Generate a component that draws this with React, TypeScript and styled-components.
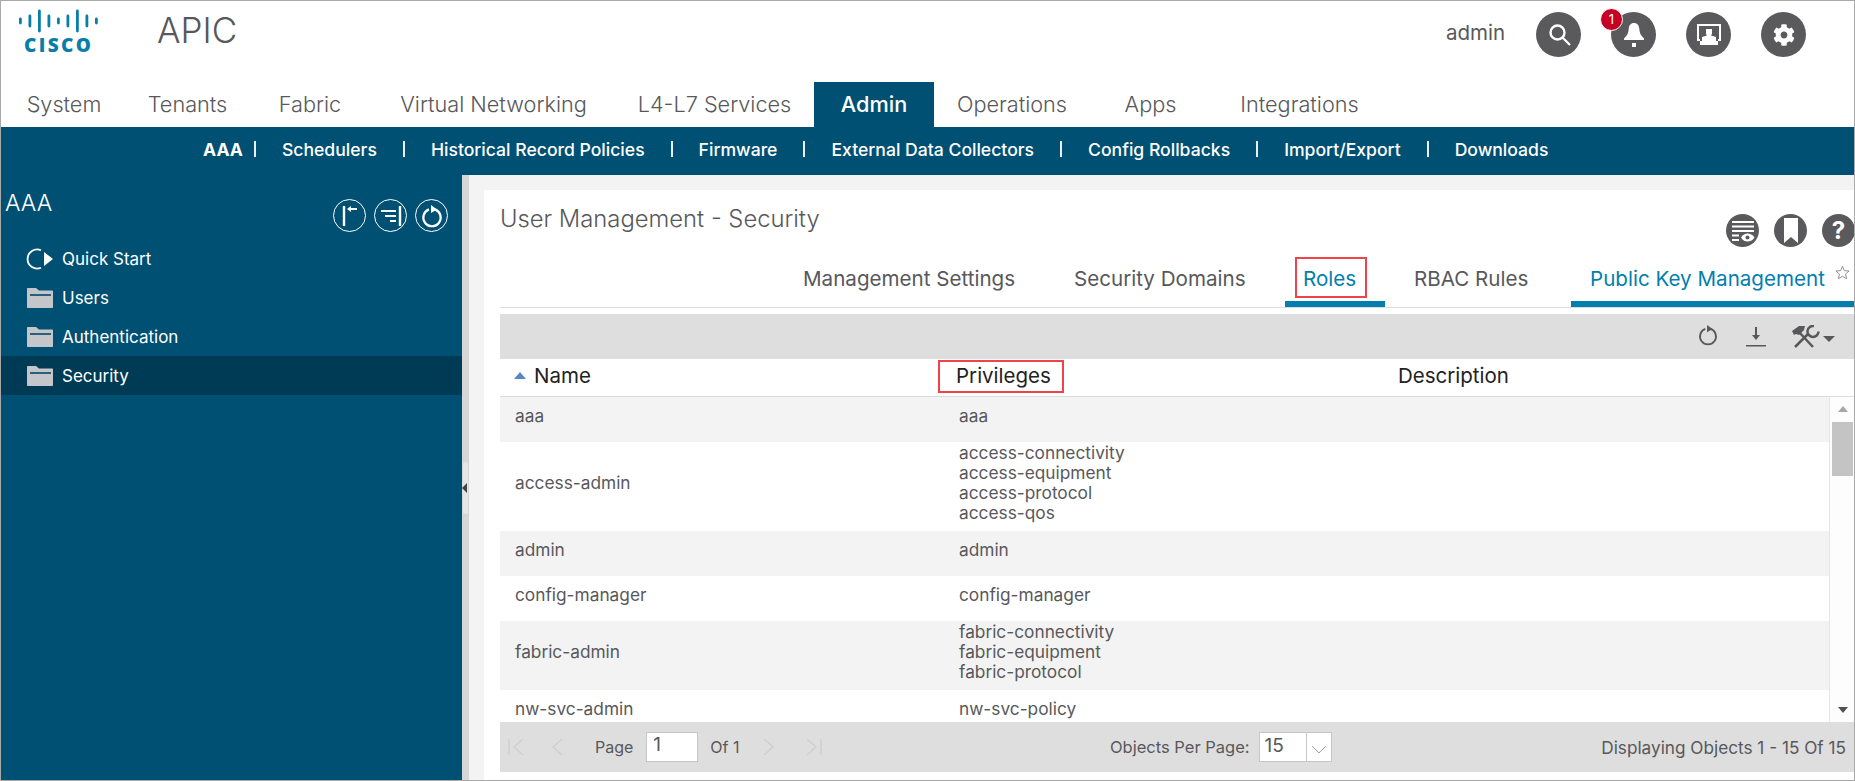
import { Fragment } from "react";
import styled, { createGlobalStyle } from "styled-components";
import { FaCog } from "react-icons/fa";

const GlobalStyle = createGlobalStyle`
  html, body {
    margin: 0;
    padding: 0;
    background: #fff;
  }

  body {
    font-family: Inter, Roboto, "Liberation Sans", sans-serif;
    color: #58585b;
  }
`;

const Frame = styled.div`
  width: 1855px;
  height: 781px;
  box-sizing: border-box;
  border: 1px solid #a9a9a9;
  display: flex;
  flex-direction: column;
  overflow: hidden;
`;

const TopBar = styled.header`
  height: 81px;
  flex: none;
  display: flex;
  align-items: flex-start;
`;

const Logo = styled.div`
  width: 156px;
  flex: none;
  padding-top: 8px;
  box-sizing: border-box;
  display: flex;
  flex-direction: column;
`;

const LogoBars = styled.svg`
  display: block;
  margin-left: 16px;
`;

const LogoWord = styled.span`
  margin-left: 23px;
  margin-top: 2px;
  font-family: "Open Sans", sans-serif;
  font-size: 19px;
  font-weight: 800;
  line-height: 20px;
  letter-spacing: 2.4px;
  color: #0a7eaa;
`;

const AppName = styled.div`
  font-size: 35px;
  font-weight: 300;
  line-height: 58px;
  color: #58585b;
`;

const TopRight = styled.div`
  margin-left: auto;
  padding: 11px 48px 0 0;
  display: flex;
  align-items: center;
`;

const UserName = styled.span`
  font-size: 20.500px;
  margin-right: 31px;
  margin-top: -5px;
  color: #58585b;
`;

const RoundButton = styled.div<{ $size?: number }>`
  position: relative;
  width: ${({ $size }) => $size ?? 45}px;
  height: ${({ $size }) => $size ?? 45}px;
  border-radius: 50%;
  background: #5a5a5d;
  color: #fff;
  display: flex;
  align-items: center;
  justify-content: center;
  flex: none;
`;

const TopButtons = styled.div`
  display: flex;
  gap: 30px;
`;

const Badge = styled.span`
  position: absolute;
  left: -11px;
  top: -4px;
  width: 23px;
  height: 23px;
  box-sizing: border-box;
  border-radius: 50%;
  background: #c70025;
  border: 1px solid #fff;
  color: #fff;
  font-size: 13px;
  line-height: 20px;
  text-align: center;
`;

const MainTabs = styled.nav`
  height: 45px;
  flex: none;
  display: flex;
`;

const MainTab = styled.div<{ $w: number; $active?: boolean }>`
  width: ${({ $w }) => $w}px;
  flex: none;
  box-sizing: border-box;
  padding-bottom: 2px;
  display: flex;
  align-items: center;
  justify-content: center;
  font-size: 21.700px;
  font-weight: ${({ $active }) => ($active ? 500 : 300)};
  background: ${({ $active }) => ($active ? "#005073" : "transparent")};
  color: ${({ $active }) => ($active ? "#fff" : "#58585b")};
`;

const SubNav = styled.nav`
  height: 48px;
  flex: none;
  box-sizing: border-box;
  padding: 0 0 4px 202px;
  background: #005073;
  color: #fff;
  display: flex;
  align-items: center;
  font-size: 17.600px;
`;

const SubItem = styled.span<{ $bold?: boolean }>`
  font-weight: ${({ $bold }) => ($bold ? 700 : 500)};
  margin-right: ${({ $bold }) => ($bold ? 11 : 26)}px;
`;

const SubSep = styled.span`
  width: 2px;
  height: 16px;
  background: #e8f0f4;
  margin-right: 26px;
`;

const Body = styled.main`
  flex: 1;
  min-height: 0;
  display: flex;
`;

const Sidebar = styled.aside`
  width: 461px;
  flex: none;
  background: #005073;
  color: #fff;
`;

const SidebarHead = styled.div`
  height: 64px;
  display: flex;
  justify-content: space-between;
  padding: 24px 14px 0 4px;
  box-sizing: border-box;
`;

const SidebarTitle = styled.div`
  font-size: 23px;
  font-weight: 300;
  line-height: 8px;
`;

const SidebarActions = styled.div`
  display: flex;
  gap: 8px;
`;

const OutlineButton = styled.div`
  width: 33px;
  height: 33px;
  box-sizing: border-box;
  border: 1px solid #fff;
  border-radius: 50%;
  display: flex;
  align-items: center;
  justify-content: center;
`;

const TreeRow = styled.div<{ $selected?: boolean }>`
  height: 39px;
  display: flex;
  align-items: center;
  gap: 8px;
  padding-left: 25px;
  font-size: 17px;
  background: ${({ $selected }) => ($selected ? "#003b55" : "transparent")};
`;

const Handle = styled.div`
  position: relative;
  width: 7px;
  flex: none;
  background: #d6d6d6;

  &::before {
    content: "";
    position: absolute;
    left: 1px;
    right: 1px;
    top: 287px;
    height: 52px;
    background: #e6e6e6;
    border-radius: 3px;
  }

  &::after {
    content: "";
    position: absolute;
    left: 0;
    top: 308px;
    border: 5px solid transparent;
    border-left: 0;
    border-right: 5px solid #444;
  }
`;

const ContentArea = styled.div`
  flex: 1;
  min-width: 0;
  background: #f3f3f3;
  padding: 15px 0 0 15px;
  display: flex;
`;

const Panel = styled.section`
  flex: 1;
  min-width: 0;
  background: #fff;
  padding: 0 0 8px 16px;
  display: flex;
  flex-direction: column;
  overflow: hidden;
`;

const PanelHead = styled.div`
  height: 67px;
  flex: none;
  display: flex;
  justify-content: space-between;
  align-items: flex-start;
`;

const PanelTitle = styled.h2`
  margin: 14px 0 0;
  font-size: 23.800px;
  font-weight: 300;
  line-height: 30px;
  color: #58585b;
`;

const PanelActions = styled.div`
  display: flex;
  gap: 15px;
  margin: 24px -1px 0 0;
`;

const HelpMark = styled.span`
  font-size: 24px;
  font-weight: 700;
  line-height: 1;
`;

const Tabs = styled.div`
  height: 50px;
  flex: none;
  display: flex;
  justify-content: flex-end;
  border-bottom: 1px solid #dcdcdc;
`;

const Tab = styled.div<{ $w: number; $pl: number; $active?: boolean }>`
  position: relative;
  width: ${({ $w }) => $w}px;
  padding: 0 0 2px ${({ $pl }) => $pl}px;
  box-sizing: border-box;
  flex: none;
  display: flex;
  align-items: center;
  font-size: 20.600px;
  color: ${({ $active }) => ($active ? "#027fae" : "#58585b")};
  border-bottom: 6px solid ${({ $active }) => ($active ? "#027fae" : "transparent")};
`;

const Star = styled.svg`
  position: absolute;
  right: 4px;
  top: 8px;
`;

const Marked = styled.span<{ $inset: string }>`
  position: relative;

  &::after {
    content: "";
    position: absolute;
    inset: ${({ $inset }) => $inset};
    border: 2px solid #f04349;
  }
`;

const Toolbar = styled.div`
  height: 45px;
  flex: none;
  margin-top: 6px;
  background: #dedede;
  display: flex;
  align-items: center;
  justify-content: flex-end;
  padding-right: 18px;
  color: #58585b;
`;

const ToolIcon = styled.svg<{ $gap?: number }>`
  display: block;
  margin-right: ${({ $gap }) => $gap ?? 0}px;
`;

const HeaderRow = styled.div`
  height: 38px;
  flex: none;
  box-sizing: border-box;
  padding-bottom: 4px;
  display: grid;
  grid-template-columns: 444px 442px 1fr;
  align-items: center;
  border-bottom: 1px solid #dcdcdc;
  font-size: 20.500px;
  color: #222;
`;

const HeaderCell = styled.div<{ $pl?: number }>`
  padding-left: ${({ $pl }) => $pl ?? 12}px;
  display: flex;
  align-items: center;
  gap: 8px;
`;

const SortArrow = styled.span`
  width: 0;
  height: 0;
  border: 6px solid transparent;
  border-top: 0;
  border-bottom: 7px solid #5b86c4;
`;

const TableBody = styled.div`
  height: 325px;
  flex: none;
  display: flex;
  overflow: hidden;
`;

const Rows = styled.div`
  flex: 1;
  min-width: 0;
`;

const Row = styled.div<{ $odd: boolean }>`
  min-height: 45px;
  box-sizing: border-box;
  display: grid;
  grid-template-columns: 444px 1fr;
  align-items: center;
  padding: 1px 0 8px;
  font-size: 17.300px;
  line-height: 20px;
  background: ${({ $odd }) => ($odd ? "#f3f3f3" : "#fff")};
`;

const Cell = styled.div`
  padding-left: 15px;
`;

const Scrollbar = styled.div`
  width: 25px;
  flex: none;
  box-sizing: border-box;
  border-left: 1px solid #e6e6e6;
  background: #fdfdfd;
  padding-left: 2px;
  display: flex;
  flex-direction: column;
  position: relative;
`;

const ScrollArrow = styled.span<{ $down?: boolean }>`
  position: absolute;
  left: 8px;
  width: 0;
  height: 0;
  border: 5.5px solid transparent;
  ${({ $down }) =>
    $down
      ? "bottom: 9px; border-bottom: 0; border-top: 6px solid #505050;"
      : "top: 9px; border-top: 0; border-bottom: 6px solid #a6a6a6;"}
`;

const ScrollThumb = styled.div`
  width: 21px;
  height: 54px;
  margin-top: 25px;
  background: #c4c4c4;
`;

const Footer = styled.div`
  height: 50px;
  flex: none;
  background: #dedede;
  display: grid;
  grid-template-columns: 610px auto 1fr;
  align-items: center;
  font-size: 16.500px;
  color: #58585b;
`;

const Pager = styled.div`
  display: flex;
  align-items: center;
  padding-left: 8px;
`;

const PagerIcon = styled.svg<{ $gap: number }>`
  display: block;
  margin-right: ${({ $gap }) => $gap}px;
  flex: none;
`;

const PagerText = styled.span<{ $gap: number }>`
  margin-right: ${({ $gap }) => $gap}px;
  font-size: 16px;
`;

const PageInput = styled.div`
  width: 52px;
  height: 30px;
  box-sizing: border-box;
  background: #fff;
  border: 1px solid #c6c6c6;
  font-size: 19px;
  line-height: 24px;
  padding-left: 6px;
  margin-right: 12px;
`;

const PerPage = styled.div`
  display: flex;
  align-items: center;
  gap: 9px;
`;

const Select = styled.div`
  width: 73px;
  height: 30px;
  box-sizing: border-box;
  background: #fff;
  border: 1px solid #c6c6c6;
  display: flex;
  font-size: 19px;
  line-height: 26px;
`;

const SelectValue = styled.span`
  width: 47px;
  padding-left: 5px;
  box-sizing: border-box;
  border-right: 1px solid #c6c6c6;
`;

const SelectCaret = styled.span`
  flex: 1;
  display: flex;
  align-items: center;
  justify-content: center;
  padding-top: 4px;
`;

const Displaying = styled.div`
  text-align: right;
  padding-right: 8px;
  font-size: 17.200px;
`;

const mainTabs = [
  { label: "System", w: 126 },
  { label: "Tenants", w: 121 },
  { label: "Fabric", w: 124 },
  { label: "Virtual Networking", w: 243 },
  { label: "L4-L7 Services", w: 199 },
  { label: "Admin", w: 120, active: true },
  { label: "Operations", w: 156 },
  { label: "Apps", w: 121 },
  { label: "Integrations", w: 177 },
];

const subItems = [
  "Schedulers",
  "Historical Record Policies",
  "Firmware",
  "External Data Collectors",
  "Config Rollbacks",
  "Import/Export",
  "Downloads",
];

const roles = [
  { name: "aaa", privileges: ["aaa"] },
  {
    name: "access-admin",
    privileges: ["access-connectivity", "access-equipment", "access-protocol", "access-qos"],
  },
  { name: "admin", privileges: ["admin"] },
  { name: "config-manager", privileges: ["config-manager"] },
  {
    name: "fabric-admin",
    privileges: ["fabric-connectivity", "fabric-equipment", "fabric-protocol"],
  },
  { name: "nw-svc-admin", privileges: ["nw-svc-policy"] },
];

const barHeights = [7, 13, 23, 13, 7, 13, 23, 13, 7];

const CiscoBars = () => (
  <LogoBars width="82" height="24" viewBox="0 0 82 24">
    {barHeights.map((h, i) => (
      <rect
        key={i}
        x={2 + i * 9.5}
        y={12 - h / 2}
        width="2.800"
        height={h}
        rx="1.400"
        fill="#0a7eaa"
      />
    ))}
  </LogoBars>
);

const SearchIcon = () => (
  <svg width="26" height="26" viewBox="0 0 26 26" fill="none" stroke="#fff">
    <circle cx="11.500" cy="10.500" r="7" strokeWidth="2.400" />
    <path d="M16.500 15.500 L24 23" strokeWidth="2.200" />
  </svg>
);

const BellIcon = () => (
  <svg width="22" height="26" viewBox="0 0 22 26" fill="#fff">
    <path d="M11 1c-3.500 0-5 2.500-5.300 6-.3 4-1.500 6.500-4.700 9.500V18h20v-1.500C17.800 13.500 16.600 11 16.300 7 16 3.500 14.500 1 11 1z" />
    <rect x="9" y="21" width="4" height="4" />
  </svg>
);

const MonitorIcon = () => (
  <svg width="24" height="22" viewBox="0 0 24 22" fill="#fff">
    <path d="M0 0h24v17h-3v-2h1V2H2v13h1v2H0z" />
    <path d="M9 5h6v5l-1 1.500 5 1.500v4h2v4H3v-4h2v-4l5-1.500L9 10z" />
  </svg>
);

const CollapseIcon = () => (
  <svg width="22" height="24" viewBox="0 0 22 24" fill="none" stroke="#fff">
    <path d="M5 2v20" strokeWidth="2.400" />
    <path d="M18 5h-7" strokeWidth="2" />
    <path d="M8 5l4-3v6z" fill="#fff" strokeWidth="0" />
  </svg>
);

const FilterIcon = () => (
  <svg width="24" height="24" viewBox="0 0 24 24" fill="none" stroke="#fff">
    <path d="M21 2v20" strokeWidth="2.400" />
    <path d="M2 7h15M6 12h11M11 17h6" strokeWidth="2" />
  </svg>
);

const RefreshIcon = ({ size = 24, color = "#fff", width = 2.200 }) => (
  <svg width={size} height={size} viewBox="0 0 24 24" fill="none" stroke={color}>
    <path d="M9 5.400A8.700 8.700 0 1 0 15 5.400" strokeWidth={width} />
    <path d="M11 1l6 4.500-6 3.500z" fill={color} strokeWidth="0" />
  </svg>
);

const QuickStartIcon = () => (
  <svg width="28" height="24" viewBox="0 0 28 24" fill="none" stroke="#fff">
    <path d="M15 3.200A9.600 9.600 0 1 0 15 20.800" strokeWidth="1.800" />
    <path d="M18 5l9 7-9 7z" fill="#fff" strokeWidth="0" />
  </svg>
);

const FolderIcon = () => (
  <svg width="28" height="22" viewBox="0 0 28 22">
    <path d="M1 2c0-.600.400-1 1-1h8l3 2.500h13c.600 0 1 .400 1 1V20c0 .600-.400 1-1 1H2c-.600 0-1-.400-1-1z" fill="#c5c6ca" />
    <rect x="4" y="7" width="21" height="2" fill="#2a5f7d" />
  </svg>
);

const ListEyeIcon = () => (
  <svg width="26" height="24" viewBox="0 0 26 24" fill="#fff">
    <rect x="2" y="2" width="22" height="2" />
    <rect x="2" y="6.500" width="22" height="2" />
    <rect x="2" y="11" width="22" height="2" />
    <rect x="2" y="15.500" width="7" height="2" />
    <rect x="2" y="20" width="7" height="2" />
    <path d="M11 18.500c2-3 4-4 6.500-4s5 1 7 4c-2 3-4.500 4-7 4s-4.500-1-6.500-4z" />
    <circle cx="17.500" cy="18.500" r="2" fill="#5a5a5d" />
  </svg>
);

const BookmarkIcon = () => (
  <svg width="18" height="28" viewBox="0 0 18 28" fill="#fff">
    <path d="M2 1h14v25l-7-6-7 6z" />
  </svg>
);

const pagerStroke = "#cfcfcf";

export default function App() {
  return (
    <>
      <GlobalStyle />
      <Frame>
        <TopBar>
          <Logo>
            <CiscoBars />
            <LogoWord>CISCO</LogoWord>
          </Logo>
          <AppName>APIC</AppName>
          <TopRight>
            <UserName>admin</UserName>
            <TopButtons>
              <RoundButton>
                <SearchIcon />
              </RoundButton>
              <RoundButton>
                <BellIcon />
                <Badge>1</Badge>
              </RoundButton>
              <RoundButton>
                <MonitorIcon />
              </RoundButton>
              <RoundButton>
                <FaCog size={22} />
              </RoundButton>
            </TopButtons>
          </TopRight>
        </TopBar>

        <MainTabs>
          {mainTabs.map((tab) => (
            <MainTab key={tab.label} $w={tab.w} $active={tab.active}>
              {tab.label}
            </MainTab>
          ))}
        </MainTabs>

        <SubNav>
          <SubItem $bold>AAA</SubItem>
          <SubSep />
          {subItems.map((item, i) => (
            <Fragment key={item}>
              <SubItem>{item}</SubItem>
              {i < subItems.length - 1 && <SubSep />}
            </Fragment>
          ))}
        </SubNav>

        <Body>
          <Sidebar>
            <SidebarHead>
              <SidebarTitle>AAA</SidebarTitle>
              <SidebarActions>
                <OutlineButton>
                  <CollapseIcon />
                </OutlineButton>
                <OutlineButton>
                  <FilterIcon />
                </OutlineButton>
                <OutlineButton>
                  <RefreshIcon />
                </OutlineButton>
              </SidebarActions>
            </SidebarHead>
            <TreeRow>
              <QuickStartIcon />
              Quick Start
            </TreeRow>
            <TreeRow>
              <FolderIcon />
              Users
            </TreeRow>
            <TreeRow>
              <FolderIcon />
              Authentication
            </TreeRow>
            <TreeRow $selected>
              <FolderIcon />
              Security
            </TreeRow>
          </Sidebar>
          <Handle />
          <ContentArea>
            <Panel>
              <PanelHead>
                <PanelTitle>User Management - Security</PanelTitle>
                <PanelActions>
                  <RoundButton $size={33}>
                    <ListEyeIcon />
                  </RoundButton>
                  <RoundButton $size={33}>
                    <BookmarkIcon />
                  </RoundButton>
                  <RoundButton $size={33}>
                    <HelpMark>?</HelpMark>
                  </RoundButton>
                </PanelActions>
              </PanelHead>

              <Tabs>
                <Tab $w={271} $pl={20}>Management Settings</Tab>
                <Tab $w={231} $pl={20}>Security Domains</Tab>
                <Tab $w={100} $pl={18} $active>
                  <Marked $inset="-9px -11px -7px -8px">Roles</Marked>
                </Tab>
                <Tab $w={186} $pl={29}>RBAC Rules</Tab>
                <Tab $w={283} $pl={19} $active>
                  Public Key Management
                  <Star width="15" height="15" viewBox="0 0 24 24" fill="none" stroke="#8c8c8c" strokeWidth="1.500">
                    <path d="M12 2l3 7 7.500.6-5.700 4.900 1.800 7.500L12 18l-6.600 4 1.800-7.500L1.500 9.600 9 9z" />
                  </Star>
                </Tab>
              </Tabs>

              <Toolbar>
                <ToolIcon as="div" $gap={25}>
                  <RefreshIcon size={22} color="#58585b" width={2} />
                </ToolIcon>
                <ToolIcon $gap={22} width="24" height="24" viewBox="0 0 24 24" fill="#58585b">
                  <rect x="11" y="2" width="2" height="10" />
                  <path d="M8 10h8l-4 5z" />
                  <rect x="2" y="20" width="20" height="1.500" />
                </ToolIcon>
                <ToolIcon width="46" height="24" viewBox="0 0 46 24" fill="#58585b">
                  <path d="M2 6l7-5h6l-1 4-5 5-3-1-2 1z" />
                  <path d="M9 7l14 15" stroke="#58585b" strokeWidth="2.500" fill="none" />
                  <path d="M18 9L5 22" stroke="#58585b" strokeWidth="2.500" fill="none" />
                  <path d="M24 1a5.500 5.500 0 1 0 4.500 5.500" stroke="#58585b" strokeWidth="2.500" fill="none" />
                  <path d="M33 11h12l-6 6z" />
                </ToolIcon>
              </Toolbar>

              <HeaderRow>
                <HeaderCell $pl={14}>
                  <SortArrow />
                  Name
                </HeaderCell>
                <HeaderCell>
                  <Marked $inset="-3px -13px -5px -18px">Privileges</Marked>
                </HeaderCell>
                <HeaderCell>Description</HeaderCell>
              </HeaderRow>

              <TableBody>
                <Rows>
                  {roles.map((role, i) => (
                    <Row key={role.name} $odd={i % 2 === 0}>
                      <Cell>{role.name}</Cell>
                      <Cell>
                        {role.privileges.map((p) => (
                          <div key={p}>{p}</div>
                        ))}
                      </Cell>
                    </Row>
                  ))}
                </Rows>
                <Scrollbar>
                  <ScrollArrow />
                  <ScrollThumb />
                  <ScrollArrow $down />
                </Scrollbar>
              </TableBody>

              <Footer>
                <Pager>
                  <PagerIcon $gap={26} width="17" height="18" viewBox="0 0 17 18" fill="none" stroke={pagerStroke} strokeWidth="1.500">
                    <path d="M1 1v16M15 1L6 9l9 8" />
                  </PagerIcon>
                  <PagerIcon $gap={32} width="12" height="18" viewBox="0 0 12 18" fill="none" stroke={pagerStroke} strokeWidth="1.500">
                    <path d="M11 1L2 9l9 8" />
                  </PagerIcon>
                  <PagerText $gap={13}>Page</PagerText>
                  <PageInput>1</PageInput>
                  <PagerText $gap={23}>Of 1</PagerText>
                  <PagerIcon $gap={30} width="12" height="18" viewBox="0 0 12 18" fill="none" stroke={pagerStroke} strokeWidth="1.500">
                    <path d="M1 1l9 8-9 8" />
                  </PagerIcon>
                  <PagerIcon $gap={0} width="17" height="18" viewBox="0 0 17 18" fill="none" stroke={pagerStroke} strokeWidth="1.500">
                    <path d="M16 1v16M2 1l9 8-9 8" />
                  </PagerIcon>
                </Pager>
                <PerPage>
                  Objects Per Page:
                  <Select>
                    <SelectValue>15</SelectValue>
                    <SelectCaret>
                      <svg width="16" height="9" viewBox="0 0 16 9" fill="none" stroke="#a0a0a0">
                        <path d="M1 1l7 7 7-7" />
                      </svg>
                    </SelectCaret>
                  </Select>
                </PerPage>
                <Displaying>Displaying Objects 1 - 15 Of 15</Displaying>
              </Footer>
            </Panel>
          </ContentArea>
        </Body>
      </Frame>
    </>
  );
}
